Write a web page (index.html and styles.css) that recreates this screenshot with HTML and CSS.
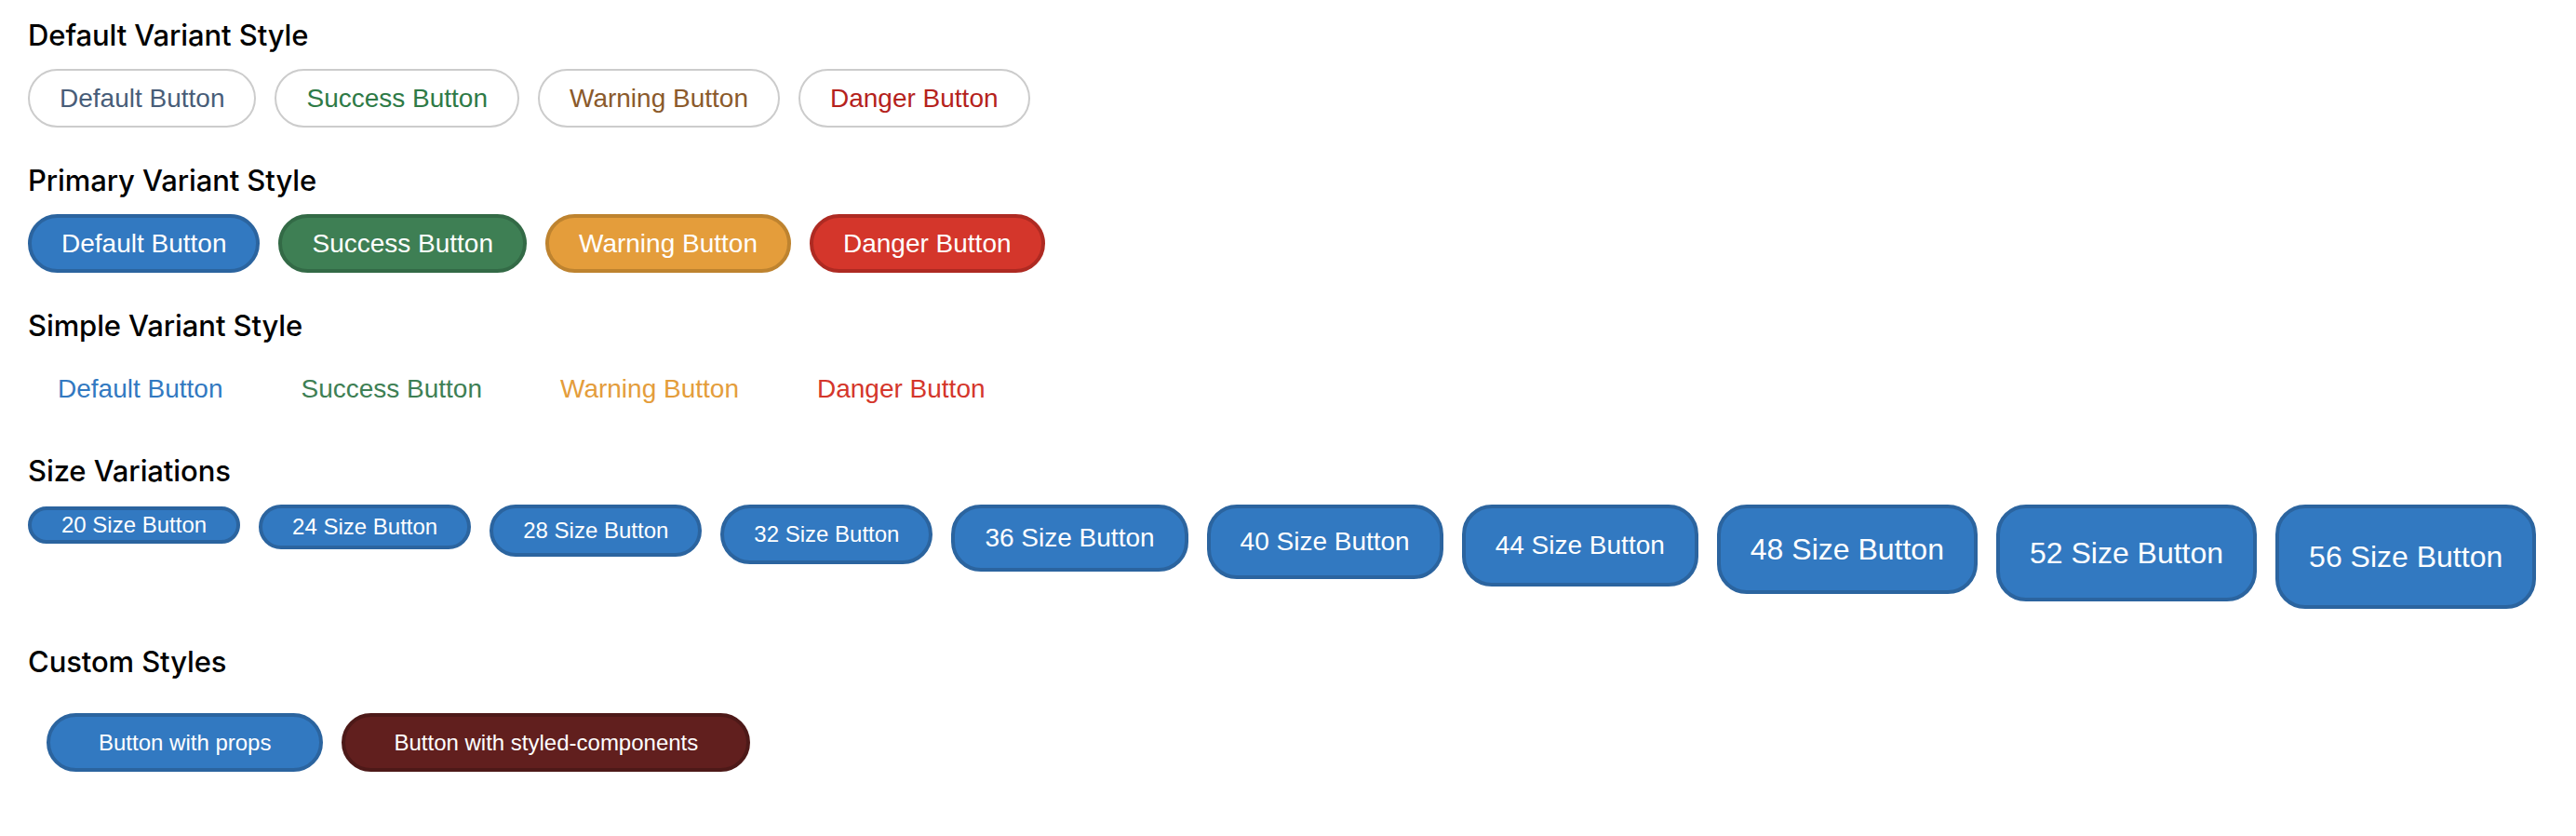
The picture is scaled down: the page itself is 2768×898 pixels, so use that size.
FILE: index.html
```html
<!DOCTYPE html>
<html lang="en">
<head>
<meta charset="utf-8">
<title>Button Variants</title>
<link rel="stylesheet" href="styles.css">
</head>
<body>
<div class="page">
  <section class="section">
    <h4 class="title">Default Variant Style</h4>
    <div class="row">
      <button class="btn outline t-default">Default Button</button>
      <button class="btn outline t-success">Success Button</button>
      <button class="btn outline t-warning">Warning Button</button>
      <button class="btn outline t-danger">Danger Button</button>
    </div>
  </section>
  <section class="section">
    <h4 class="title">Primary Variant Style</h4>
    <div class="row">
      <button class="btn solid f-default">Default Button</button>
      <button class="btn solid f-success">Success Button</button>
      <button class="btn solid f-warning">Warning Button</button>
      <button class="btn solid f-danger">Danger Button</button>
    </div>
  </section>
  <section class="section">
    <h4 class="title">Simple Variant Style</h4>
    <div class="row">
      <button class="btn simple s-default">Default Button</button>
      <button class="btn simple s-success">Success Button</button>
      <button class="btn simple s-warning">Warning Button</button>
      <button class="btn simple s-danger">Danger Button</button>
    </div>
  </section>
  <section class="section">
    <h4 class="title">Size Variations</h4>
    <div class="row">
      <button class="btn sized f-default sz20">20 Size Button</button>
      <button class="btn sized f-default sz24">24 Size Button</button>
      <button class="btn sized f-default sz28">28 Size Button</button>
      <button class="btn sized f-default sz32">32 Size Button</button>
      <button class="btn sized f-default sz36">36 Size Button</button>
      <button class="btn sized f-default sz40">40 Size Button</button>
      <button class="btn sized f-default sz44">44 Size Button</button>
      <button class="btn sized f-default sz48">48 Size Button</button>
      <button class="btn sized f-default sz52">52 Size Button</button>
      <button class="btn sized f-default sz56">56 Size Button</button>
    </div>
  </section>
  <section class="section">
    <h4 class="title">Custom Styles</h4>
    <div class="row custom-row">
      <button class="btn custom f-default">Button with props</button>
      <button class="btn custom f-maroon">Button with styled-components</button>
    </div>
  </section>
</div>
</body>
</html>
```
FILE: styles.css
```css
html, body {
  margin: 0;
  padding: 0;
  background: #ffffff;
}

body {
  font-family: "Liberation Sans", Arial, sans-serif;
}

.page {
  display: flex;
  flex-direction: column;
  padding: 18px 0 0 30px;
}

.section {
  display: flex;
  flex-direction: column;
  gap: 16px;
  margin-bottom: 37px;
}

.title {
  margin: 0;
  font-family: Inter, "Liberation Sans", sans-serif;
  font-weight: 500;
  font-size: 31px;
  line-height: 40px;
  letter-spacing: -0.1px;
  color: #000000;
}

.row {
  display: flex;
  align-items: flex-start;
  gap: 20px;
}

.custom-row {
  padding: 19px 0 0 20px;
}

.btn {
  display: inline-flex;
  align-items: center;
  justify-content: center;
  box-sizing: border-box;
  margin: 0;
  padding: 0 32px;
  height: 63px;
  font-family: "Liberation Sans", Arial, sans-serif;
  font-size: 28px;
  white-space: nowrap;
  border-radius: 32px;
  background: transparent;
  cursor: pointer;
}

/* default (outline) variant */
.outline {
  background: #ffffff;
  border: 2px solid #cccccc;
}
.t-default { color: #485d78; }
.t-success { color: #2e7a46; }
.t-warning { color: #8b5a2b; }
.t-danger  { color: #b5221c; }

/* primary (solid) variant */
.solid {
  color: #ffffff;
}
.f-default { background: #3279c1; border: 4px solid #2b649f; color: #ffffff; }
.f-success { background: #3e7f54; border: 4px solid #336a46; color: #ffffff; }
.f-warning { background: #e49d3b; border: 4px solid #be832f; color: #ffffff; }
.f-danger  { background: #d4362b; border: 4px solid #ae2a22; color: #ffffff; }
.f-maroon  { background: #611f1e; border: 4px solid #4d1918; color: #ffffff; }

/* simple variant */
.simple {
  border: none;
  background: transparent;
}
.s-default { color: #3279c1; }
.s-success { color: #3e7f54; }
.s-warning { color: #e49d3b; }
.s-danger  { color: #d4362b; }

/* sizes */
.sized { border-radius: 32px; }
.sz20 { height: 40px;  font-size: 24px; margin-top: 2px; }
.sz24 { height: 48px;  font-size: 24px; }
.sz28 { height: 56px;  font-size: 24px; }
.sz32 { height: 64px;  font-size: 24px; }
.sz36 { height: 72px;  font-size: 28px; }
.sz40 { height: 80px;  font-size: 28px; }
.sz44 { height: 88px;  font-size: 28px; }
.sz48 { height: 96px;  font-size: 32px; }
.sz52 { height: 104px; font-size: 32px; }
.sz56 { height: 112px; font-size: 32px; }

/* custom */
.custom {
  padding: 0 52px;
  font-size: 24px;
  border-radius: 40px;
}
```
